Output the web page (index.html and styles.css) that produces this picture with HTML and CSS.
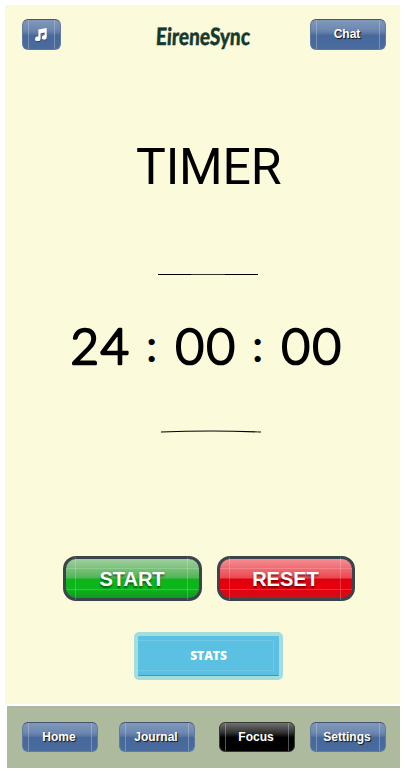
FILE: index.html
```html
<!DOCTYPE html>
<html lang="en">
<head>
<meta charset="utf-8">
<title>EireneSync</title>
<link rel="stylesheet" href="styles.css">
</head>
<body>
<div class="screen">
  <header class="header">
    <button class="btn btn-music" aria-label="Music">
      <svg width="14" height="14" viewBox="0 0 14 14"><path class="note-shadow" d="M4.500 1.800 13 0v9.500a2.400 2 0 1 1-2-2V4.200L6.500 5.200V11.200a2.700 2.200 0 1 1-2-2.200z" transform="translate(0 .8)"/><path class="note" d="M4.300 1.500 12.800 0v9.500a2.500 2.200 0 1 1-2.200-2.200V4.400L6.600 5.400V11a2.800 2.400 0 1 1-2.300-2.400z"/></svg>
    </button>
    <svg class="brand" width="98" height="31" viewBox="0 0 98 31"><text transform="skewX(-3)" x="3" y="26.500" textLength="94" lengthAdjust="spacingAndGlyphs">EireneSync</text></svg>
    <button class="btn">Chat</button>
  </header>
  <main class="main">
    <h1 class="title">TIMER</h1>
    <svg class="rule rule-top" width="101" height="4" viewBox="0 0 101 4"><path d="M0 1.500H33M67 1.500H100"/><path class="thin" d="M33 1.500H67"/></svg>
    <svg class="clock" width="280" height="50" viewBox="0 0 280 50"><text y="43" x="8.500 38.500">24<tspan class="colon" x="84.500" y="39.500">:</tspan><tspan y="43" x="113.500 144.500">00</tspan><tspan class="colon" x="190.500" y="39.500">:</tspan><tspan y="43" x="219.500 250.500">00</tspan></text></svg>
    <svg class="rule rule-bottom" width="101" height="4" viewBox="0 0 101 4"><path d="M0 2Q50 0 100 2"/></svg>
    <div class="actions">
      <button class="action start">START</button>
      <button class="action reset">RESET</button>
    </div>
    <button class="stats">STATS</button>
  </main>
</div>
<nav class="nav">
  <button class="btn">Home</button>
  <button class="btn">Journal</button>
  <button class="btn active">Focus</button>
  <button class="btn">Settings</button>
</nav>
</body>
</html>
```
FILE: styles.css
```css
* { box-sizing: border-box; }
body { margin: 0; padding: 5px 5px 0; background: #fff; font-family: "Liberation Sans", Arial, sans-serif; }
button { padding: 0; font-family: inherit; font-weight: bold; color: #fff; }
svg { display: block; flex: none; overflow: visible; }
.screen { width: 395px; height: 699px; background: #fbfadb; }
.header { display: flex; height: 59px; padding: 14px 14px 0 17px; align-items: flex-start; }
.btn {
  position: relative; width: 76px; height: 31px; flex: none; border: 1px solid #647c9c; border-top-color: #435570; border-radius: 6px;
  background: linear-gradient(#8198ba 0, #6c87b1 35%, #56739f 49%, #46689a 52%, #4a6b9d 100%);
  font-size: 12px; line-height: 29px; text-indent: -2px; text-shadow: 1px 1px 1px #111;
}
.btn::before { content: ""; position: absolute; top: 0; bottom: 0; left: 5px; right: 5px; border: solid rgba(190, 210, 210, .4); border-width: 0 1px; }
.btn-music { display: flex; width: 39px; padding-right: 2px; align-items: center; justify-content: center; }
.note { fill: #fff; }
.note-shadow { fill: #222; }
.brand { margin: 0 58px 0 93px; }
.brand text { font: 900 24px Lato, sans-serif; fill: #15392f; stroke: #15392f; stroke-width: .4; stroke-linejoin: round; }
.main { display: flex; flex-direction: column; align-items: flex-start; }
.title { margin: 73px 0 0 131px; font: 400 50px/60px Roboto, sans-serif; letter-spacing: -.2px; color: #000; }
.rule path { fill: none; stroke: #000; stroke-width: 1.200; }
.rule .thin { stroke-width: .8; }
.rule-top { margin: 76px 0 0 153px; }
.clock { margin: 44px 0 0 57px; }
.clock text { font: 300 49px Lato, sans-serif; stroke: #000; stroke-width: 2.600; stroke-linejoin: round; }
.clock .colon { font-size: 43px; stroke-width: 2.200; }
.rule-bottom { margin: 59px 0 0 156px; }
.actions { display: flex; gap: 15px; margin: 122px 0 0 58px; }
.action { position: relative; width: 139px; height: 45px; border: 3px solid #3c444b; border-radius: 13px; font-size: 20px; line-height: 40px; text-indent: -1px; text-shadow: 0 2px 2px rgba(0, 0, 0, .5); }
.action::before { content: ""; position: absolute; top: -2px; bottom: -2px; left: 9px; right: 11px; border: solid rgba(255, 255, 255, .2); border-width: 0 1px; }
.action::after { content: ""; position: absolute; left: 0; right: 0; top: 9px; bottom: 8px; border: solid rgba(255, 255, 255, .18); border-width: 1px 0; }
.start { background: linear-gradient(#a0cf9e 0, #51b455 49%, #0db51b 51%, #0cb51c 78%, #119722 100%); }
.reset { width: 138px; background: linear-gradient(#f48e92 0, #ec4850 49%, #e1000d 51%, #e7000e 78%, #c9101c 100%); }
.stats { position: relative; width: 149px; height: 48px; margin: 31px 0 0 129px; border: 4px solid #a5dddf; border-radius: 5px; background: #5ac1e3; box-shadow: inset 0 -1px #379abd; font: 800 12px/40px "Open Sans", sans-serif; }
.stats::before { content: ""; position: absolute; top: 4px; bottom: 5px; left: 0; right: 5px; border: solid rgba(255, 255, 255, .13); border-width: 1px 1px 1px 0; }
.nav { display: grid; grid-template-columns: 97px 100px 91px 76px; width: 393px; height: 62px; margin: 2px 0 0 2px; padding-top: 16px; padding-left: 15px; background: #adba9e; }
.nav .btn { height: 30px; line-height: 28px; }
.nav .active { border-color: #353a36; background: linear-gradient(#707070 0, #303030 35%, #000 52%); }
```
